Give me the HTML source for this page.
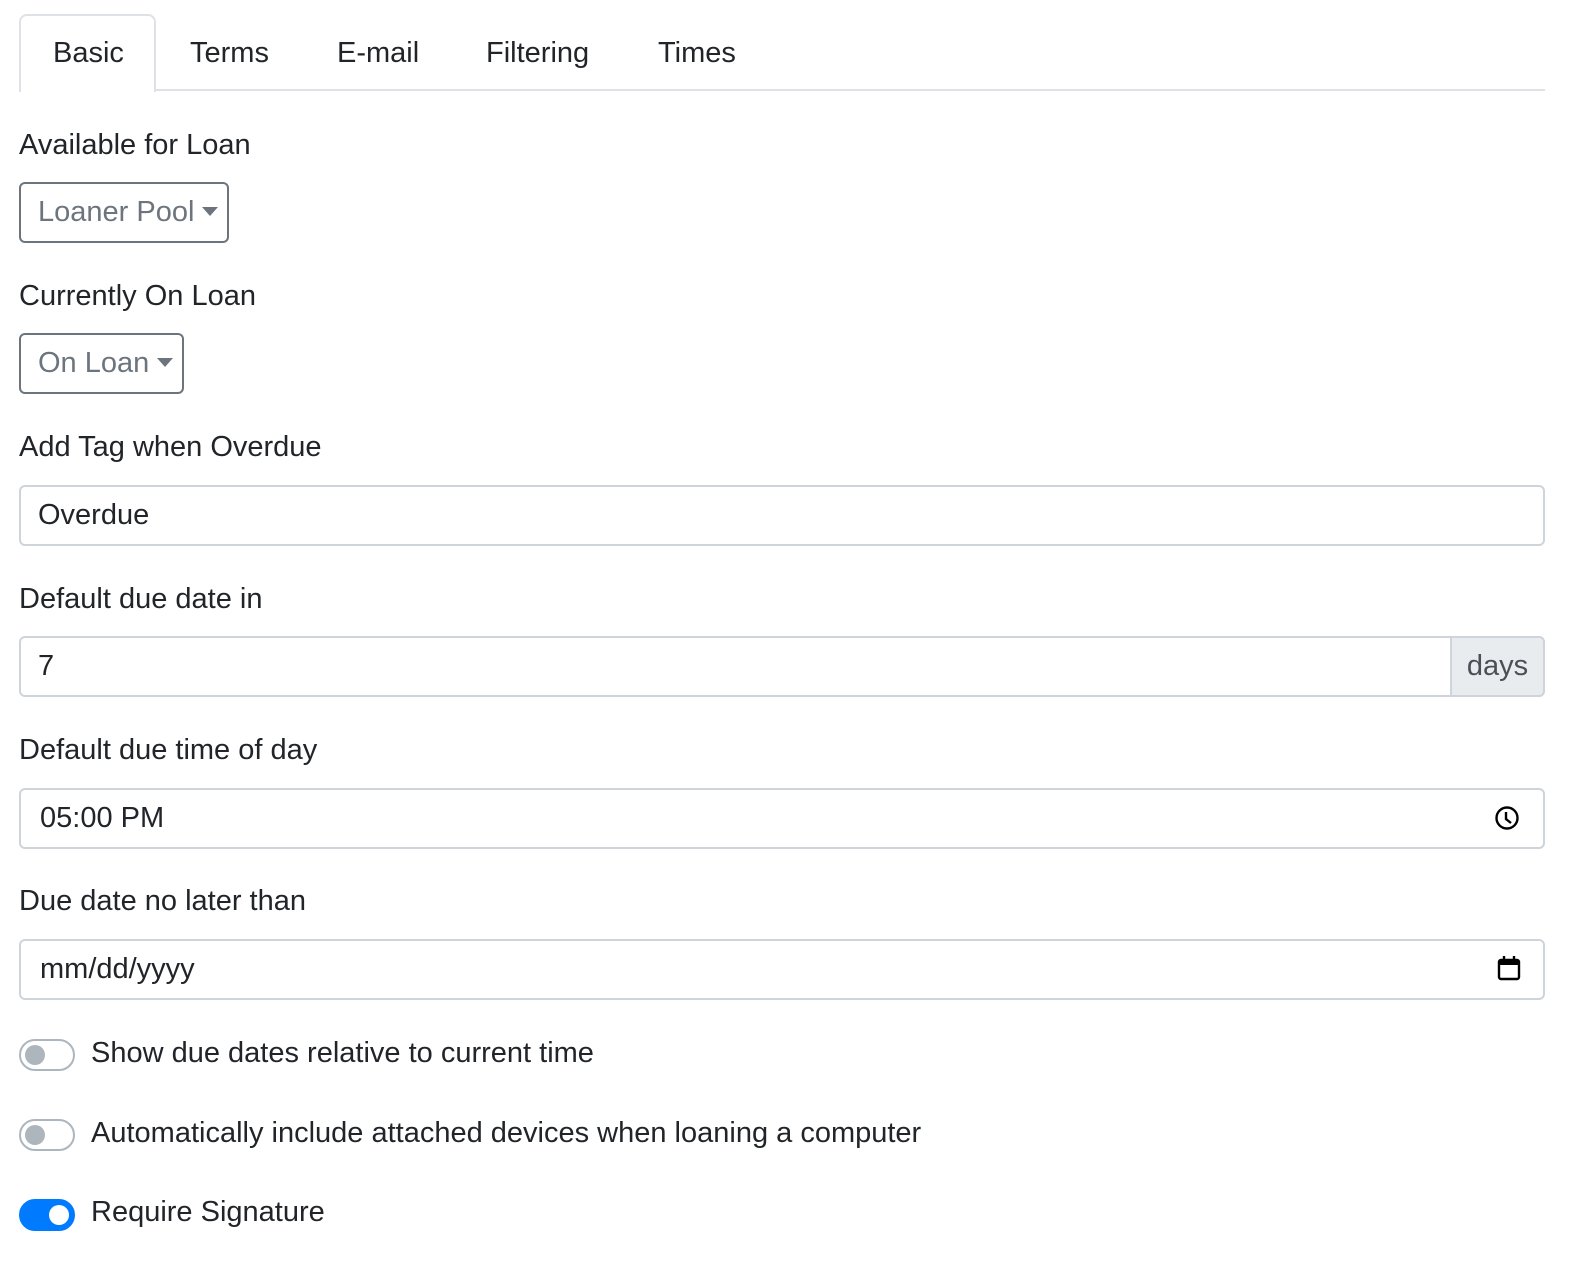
<!DOCTYPE html>
<html><head><style>
*{box-sizing:border-box;margin:0;padding:0}
body{width:1574px;height:1270px;background:#fff;font-family:"Liberation Sans",sans-serif;color:#212529;position:relative;overflow:hidden;font-size:29px}
.a{position:absolute;white-space:nowrap}
.lbl{position:absolute;left:19px;line-height:40px;height:40px}
.inp{position:absolute;left:19px;width:1526px;height:61px;border:2px solid #ced4da;border-radius:6px;line-height:57px;padding-left:17px}
.dd{position:absolute;left:19px;height:61px;border:2px solid #6c757d;border-radius:6px;color:#6c757d;line-height:57px;padding-left:17px}
.caret{display:inline-block;width:0;height:0;border-left:8px solid transparent;border-right:8px solid transparent;border-top:9px solid #6c757d;vertical-align:middle;margin-left:8px;margin-top:-4px}
.tg{position:absolute;left:19px;width:56px;height:32px;border-radius:16px;border:2px solid #adb5bd;background:#fff}
.tg i{position:absolute;left:4px;top:4px;width:20px;height:20px;border-radius:50%;background:#adb5bd}
.tg.on{background:#007bff;border-color:#007bff}
.tg.on i{left:28px;background:#fff}
</style></head><body>
<div class="a" style="left:19px;top:14px;width:137px;height:78px;border:2px solid #dee2e6;border-bottom:none;border-radius:8px 8px 0 0;background:#fff;z-index:2"></div>
<div class="a" style="left:19px;top:89px;width:1526px;height:2px;background:#dee2e6"></div>
<div class="a" style="left:53px;top:33px;line-height:40px;z-index:3">Basic</div>
<div class="a" style="left:190px;top:33px;line-height:40px">Terms</div>
<div class="a" style="left:337px;top:33px;line-height:40px">E-mail</div>
<div class="a" style="left:486px;top:33px;line-height:40px">Filtering</div>
<div class="a" style="left:658px;top:33px;line-height:40px">Times</div>

<div class="lbl" style="top:125px">Available for Loan</div>
<div class="dd" style="top:182px;width:210px">Loaner Pool<span class="caret"></span></div>
<div class="lbl" style="top:276px">Currently On Loan</div>
<div class="dd" style="top:333px;width:165px">On Loan<span class="caret"></span></div>
<div class="lbl" style="top:427px">Add Tag when Overdue</div>
<div class="inp" style="top:485px">Overdue</div>
<div class="lbl" style="top:579px">Default due date in</div>
<div class="inp" style="top:636px">7</div>
<div class="a" style="left:1450px;top:636px;width:95px;height:61px;background:#e9ecef;border:2px solid #ced4da;border-radius:0 6px 6px 0;color:#495057;line-height:57px;text-align:center">days</div>
<div class="lbl" style="top:730px">Default due time of day</div>
<div class="inp" style="top:788px;padding-left:19px">05:00 PM</div>
<svg class="a" style="left:1494px;top:805px" width="26" height="26" viewBox="0 0 26 26"><circle cx="13" cy="13" r="10.5" fill="none" stroke="#000" stroke-width="2.4"/><path d="M12 7v7l5 4" fill="none" stroke="#000" stroke-width="2.4"/></svg>
<div class="lbl" style="top:881px">Due date no later than</div>
<div class="inp" style="top:939px;padding-left:19px">mm/dd/yyyy</div>
<svg class="a" style="left:1497px;top:955px" width="24" height="26" viewBox="0 0 24 26"><rect x="2" y="5" width="20" height="19" rx="2" fill="none" stroke="#000" stroke-width="2.4"/><rect x="2" y="5" width="20" height="5" fill="#000"/><path d="M7 1v5M17 1v5" stroke="#000" stroke-width="2.4"/></svg>

<div class="tg" style="top:1039px"><i></i></div>
<div class="a" style="left:91px;top:1033px;line-height:40px">Show due dates relative to current time</div>
<div class="tg" style="top:1119px"><i></i></div>
<div class="a" style="left:91px;top:1113px;line-height:40px">Automatically include attached devices when loaning a computer</div>
<div class="tg on" style="top:1199px"><i></i></div>
<div class="a" style="left:91px;top:1192px;line-height:40px">Require Signature</div>
</body></html>
